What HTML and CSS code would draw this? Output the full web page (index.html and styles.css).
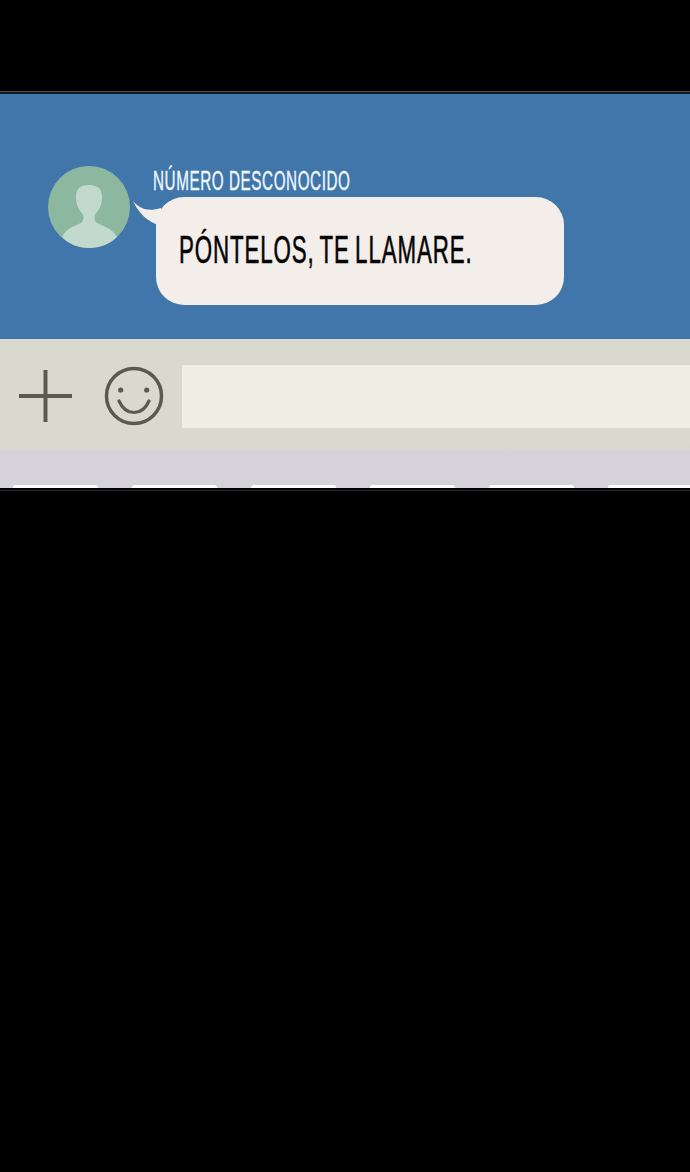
FILE: index.html
```html
<!DOCTYPE html>
<html lang="es">
<head>
  <meta charset="UTF-8">
  <title>Chat</title>
  <link rel="stylesheet" href="styles.css">
</head>
<body>

  <!-- Conversacion -->
  <div class="chat">
    <svg class="avatar" width="82" height="82" viewBox="0 0 82 82">
      <circle cx="41" cy="41" r="41" fill="#8cb8a0"/>
      <path d="M14 71C18 62 27 60 33 57C36 55 36 50 34 47C30 43 28 38 28 31C28 23 32 19 41 19C50 19 54 23 54 31C54 38 52 43 48 47C46 50 46 55 49 57C55 60 64 62 69 71C62 78 52 82 41 82C30 82 21 78 14 71Z" fill="#c2d9cd"/>
    </svg>
    <div class="message">
      <div class="sender"><span class="narrow">NÚMERO DESCONOCIDO</span></div>
      <div class="bubble">
        <svg class="tail" width="28" height="26" viewBox="0 0 28 26">
          <path d="M0 0C7 8 15 11 28 7V25C15 21 6 13 0 0Z" fill="#f3eeea"/>
        </svg>
        <span class="narrow">PÓNTELOS, TE LLAMARE.</span>
      </div>
    </div>
  </div>

  <!-- Barra de entrada -->
  <div class="input-bar">
    <svg class="icon-plus" width="53" height="52" viewBox="0 0 53 52">
      <path d="M26.5 0v52M0 26h53" stroke="#5b5a4e" stroke-width="4" fill="none"/>
    </svg>
    <svg class="icon-smile" width="60" height="60" viewBox="0 0 60 60">
      <circle cx="30" cy="30" r="27.5" stroke="#5b5a4e" stroke-width="3.5" fill="none"/>
      <circle cx="16.7" cy="24" r="2.6" fill="#5b5a4e"/>
      <circle cx="42.7" cy="24" r="2.6" fill="#5b5a4e"/>
      <path d="M15 35C19 44 25 46.5 30 46.5S41 44 45 35" stroke="#5b5a4e" stroke-width="3.2" stroke-linecap="round" fill="none"/>
    </svg>
    <div class="text-field"></div>
  </div>

  <!-- Teclado, solo se ve el borde de la primera fila -->
  <div class="keyboard">
    <div class="key"></div>
    <div class="key"></div>
    <div class="key"></div>
    <div class="key"></div>
    <div class="key"></div>
    <div class="key"></div>
  </div>

</body>
</html>
```

FILE: styles.css
```css
html, body {
  background-color: #000;
}
body {
  margin: 0;
  padding-top: 91px;
  height: 1081px;
  overflow: hidden;
  font-family: "Liberation Sans", sans-serif;
}
.chat {
  display: flex;
  align-items: flex-start;
  height: 248px;
  padding: 74px 0 0 48px;
  box-sizing: border-box;
  background-color: #4176aa;
  border-top: 1px solid #4a4d52;
  box-shadow: inset 0 2px 0 #15191f;
}
.avatar {
  flex: none;
}
.message {
  margin-left: 23px;
  margin-top: 1px;
}
/* no hay fuente condensada instalada */
.narrow {
  display: inline-block;
  transform-origin: left center;
  white-space: nowrap;
}
.sender {
  height: 30px;
  line-height: 28px;
  font-size: 27px;
  letter-spacing: 1px;
  color: #eef8fc;
  -webkit-text-stroke: 0.4px #eef8fc;
}
.sender .narrow {
  transform: scaleX(0.565);
}
.bubble {
  position: relative;
  width: 408px;
  height: 108px;
  margin-left: 3px;
  padding: 32px 0 0 23px;
  box-sizing: border-box;
  background-color: #f3eeea;
  border-radius: 28px;
  font-size: 38px;
  line-height: 42px;
  letter-spacing: 1.5px;
  word-spacing: -3px;
  color: #050505;
  -webkit-text-stroke: 0.6px #050505;
}
.bubble .narrow {
  transform: scaleX(0.587);
}
.tail {
  position: absolute;
  left: -23px;
  top: 4px;
}
.input-bar {
  display: flex;
  align-items: center;
  height: 112px;
  padding: 2px 0 0 19px;
  box-sizing: border-box;
  background: linear-gradient(#d9dacd 94%, #d6d5d2);
}
.icon-plus {
  flex: none;
}
.icon-smile {
  flex: none;
  margin-left: 32px;
}
.text-field {
  flex: 1;
  height: 63px;
  margin-left: 18px;
  background-color: #eeeee2;
}
.keyboard {
  display: flex;
  align-items: flex-end;
  gap: 34px;
  height: 37px;
  padding-left: 13px;
  overflow: hidden;
  background-color: #d5d3d9;
  box-shadow: 0 2px 0 #000, 0 3px 0 #2a2a2e;
}
.key {
  flex: none;
  width: 85px;
  height: 3px;
  background-color: #fff;
  border-radius: 6px 6px 0 0;
}
```
